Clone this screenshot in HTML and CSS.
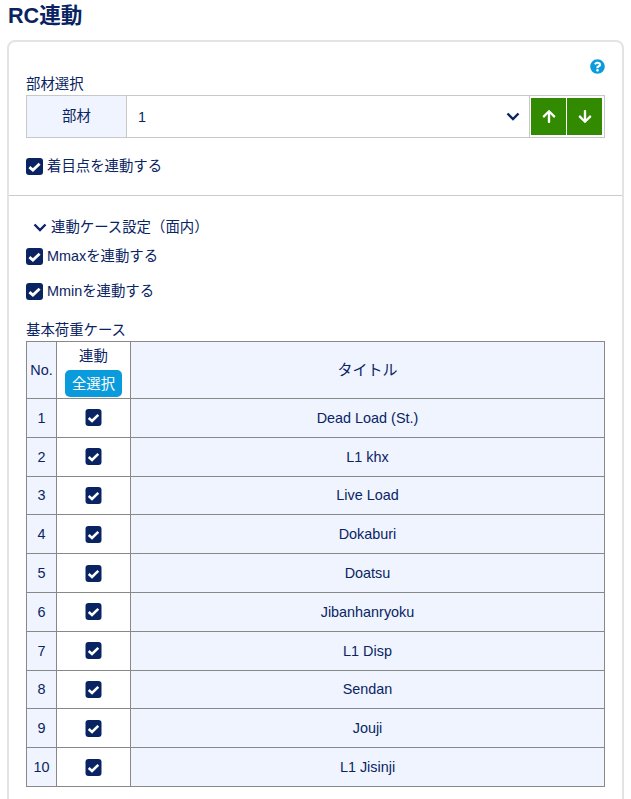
FILE: index.html
```html
<!DOCTYPE html>
<html lang="ja">
  <head>
    <meta charset="UTF-8" />
    <meta name="viewport" content="width=device-width, initial-scale=1.0" />
    <title>RC連動</title>
    <link rel="stylesheet" href="styles.css">
  </head>
  <body>
    <h1 class="page-title">RC連動</h1>

    <div class="card">
      <!-- Member selection -->
      <section class="card-top">
        <div class="help-row">
          <svg class="help-icon" viewBox="0 0 512 512"><path d="M504 256c0 136.997-111.043 248-248 248S8 392.997 8 256C8 119.083 119.043 8 256 8s248 111.083 248 248zM262.655 90c-54.497 0-89.255 22.957-116.549 63.758-3.536 5.286-2.353 12.415 2.715 16.258l34.699 26.31c5.205 3.947 12.621 3.008 16.665-2.122 17.864-22.658 30.113-35.797 57.303-35.797 20.429 0 45.698 13.148 45.698 32.958 0 14.976-12.363 22.667-32.534 33.976C247.128 238.528 216 254.941 216 296v4c0 6.627 5.373 12 12 12h56c6.627 0 12-5.373 12-12v-1.333c0-28.462 83.186-29.647 83.186-106.667 0-58.002-60.165-102-116.531-102zM256 338c-25.365 0-46 20.635-46 46 0 25.364 20.635 46 46 46s46-20.636 46-46c0-25.365-20.635-46-46-46z"/></svg>
        </div>
        <div class="field-label">部材選択</div>
        <div class="member-select">
          <div class="member-name">部材</div>
          <div class="member-value">
            <span>1</span>
            <svg class="chevron" viewBox="0 0 14 9"><path d="M1.5 1.5 7 7l5.5-5.5"/></svg>
          </div>
          <div class="member-buttons">
            <button class="arrow-btn" type="button">
              <svg viewBox="0 0 448 512"><path d="M34.9 289.5l-22.2-22.2c-9.4-9.4-9.4-24.6 0-33.9L207 39c9.4-9.4 24.6-9.4 33.9 0l194.3 194.3c9.4 9.4 9.4 24.6 0 33.9L413 289.4c-9.5 9.5-25 9.3-34.3-.4L264 168.6V456c0 13.3-10.7 24-24 24h-32c-13.3 0-24-10.7-24-24V168.6L69.2 289.1c-9.3 9.8-24.8 10-34.3.4z"/></svg>
            </button>
            <button class="arrow-btn" type="button">
              <svg viewBox="0 0 448 512"><path d="M413.1 222.5l22.2 22.2c9.4 9.4 9.4 24.6 0 33.9L241 473c-9.4 9.4-24.6 9.4-33.9 0L12.7 278.6c-9.4-9.4-9.4-24.6 0-33.9l22.2-22.2c9.5-9.5 25-9.3 34.3.4L184 343.4V56c0-13.3 10.7-24 24-24h32c13.3 0 24 10.7 24 24v287.4l114.8-120.5c9.3-9.8 24.8-10 34.3-.4z"/></svg>
            </button>
          </div>
        </div>
        <label class="check-row check-row-first">
          <span class="check"><svg viewBox="0 0 16 16"><path d="M3.2 8.6 6.5 11.4 12.8 5.4"/></svg></span>
          着目点を連動する
        </label>
      </section>

      <!-- Link case settings -->
      <section class="card-bottom">
        <div class="section-toggle">
          <svg class="chevron" viewBox="0 0 14 9"><path d="M1.5 1.5 7 7l5.5-5.5"/></svg>
          連動ケース設定（面内）
        </div>
        <label class="check-row">
          <span class="check"><svg viewBox="0 0 16 16"><path d="M3.2 8.6 6.5 11.4 12.8 5.4"/></svg></span>
          Mmaxを連動する
        </label>
        <label class="check-row check-row-second">
          <span class="check"><svg viewBox="0 0 16 16"><path d="M3.2 8.6 6.5 11.4 12.8 5.4"/></svg></span>
          Mminを連動する
        </label>

        <div class="table-label">基本荷重ケース</div>
        <table class="case-table">
          <thead>
            <tr>
              <th class="col-no">No.</th>
              <th class="col-link">
                <div>連動</div>
                <button class="select-all" type="button">全選択</button>
              </th>
              <th class="col-title">タイトル</th>
            </tr>
          </thead>
          <tbody id="caseRows"></tbody>
        </table>
      </section>
    </div>

    <script>
      const cases = [
        "Dead Load (St.)",
        "L1 khx",
        "Live Load",
        "Dokaburi",
        "Doatsu",
        "Jibanhanryoku",
        "L1 Disp",
        "Sendan",
        "Jouji",
        "L1 Jisinji",
      ];

      // Fill the load case table
      const caseRows = document.getElementById("caseRows");
      cases.forEach((title, i) => {
        const row = document.createElement("tr");
        row.innerHTML = `
          <td class="cell-no">${i + 1}</td>
          <td class="cell-link"><span class="check check-small"><svg viewBox="0 0 16 16"><path d="M3.2 8.6 6.5 11.4 12.8 5.4"/></svg></span></td>
          <td class="cell-title">${title}</td>`;
        caseRows.appendChild(row);
      });
    </script>
  </body>
</html>
```

FILE: styles.css
```css
html {
  height: 100%;
  overflow: hidden;
}
body {
  margin: 0;
  padding: 0 7px;
  font-family: "Liberation Sans", "Noto Sans CJK JP", sans-serif;
  font-size: 14.4px;
  line-height: 20px;
  color: #0a2463;
  background-color: #fff;
}
.page-title {
  margin: 0;
  height: 40px;
  padding: 3px 0 0 1px;
  box-sizing: border-box;
  font-size: 21.6px;
  line-height: 25px;
  font-weight: bold;
  color: #0a2463;
}
.card {
  border: 2px solid #e3e3e3;
  border-radius: 8px;
  background-color: #fff;
}
.card-top {
  padding: 17px 17px 19px;
  border-bottom: 1px solid #ccc;
}
.help-row {
  display: flex;
  justify-content: flex-end;
  height: 15px;
}
.help-icon {
  width: 15px;
  height: 15px;
  fill: #0a9bdc;
}
.field-label {
  margin-bottom: 1px;
}
.member-select {
  display: flex;
  height: 43px;
  box-sizing: border-box;
  border: 1px solid #c8c8c8;
}
.member-name {
  display: flex;
  align-items: center;
  justify-content: center;
  width: 99px;
  padding-bottom: 2px;
  background-color: #eff4ff;
  border-right: 1px solid #c8c8c8;
}
.member-value {
  flex: 1;
  display: flex;
  align-items: center;
  justify-content: space-between;
  padding: 0 9px 0 11px;
}
.member-buttons {
  display: flex;
  gap: 1px;
  padding: 2px 2px 2px 1px;
  border-left: 1px solid #c8c8c8;
}
.arrow-btn {
  display: flex;
  align-items: center;
  justify-content: center;
  width: 35px;
  padding: 0;
  border: none;
  background-color: #328a00;
}
.arrow-btn svg {
  width: 14px;
  height: 15px;
  fill: #fff;
}
.chevron {
  width: 14px;
  height: 9px;
  fill: none;
  stroke: #0a2463;
  stroke-width: 2.4;
}
.check-row {
  display: flex;
  align-items: center;
  gap: 4px;
  height: 20px;
}
.check-row-first {
  margin-top: 18px;
}
.check-row-second {
  margin-top: 15px;
}
.check {
  display: inline-flex;
  width: 17px;
  height: 17px;
  border-radius: 3px;
  background-color: #0a2463;
}
.check-small {
  display: flex;
  width: 16px;
  height: 17px;
  margin: 0 auto;
  transform: translateX(-0.5px);
}
.check svg {
  width: 100%;
  height: 100%;
  fill: none;
  stroke: #fff;
  stroke-width: 2.6;
}
.card-bottom {
  padding: 21px 17px 40px;
}
.section-toggle {
  display: flex;
  align-items: center;
  gap: 4px;
  height: 20px;
  margin-bottom: 9px;
  padding-left: 7px;
}
.table-label {
  margin-top: 19px;
  margin-bottom: 1px;
}
.case-table {
  width: 579px;
  table-layout: fixed;
  border-collapse: collapse;
  font-size: 14.4px;
}
.case-table th,
.case-table td {
  border: 1px solid #888;
  padding: 0;
  text-align: center;
  font-weight: normal;
  height: 37.8px;
}
.case-table th {
  height: 56px;
}
.col-no {
  width: 29px;
  background-color: #eff4ff;
}
.case-table .col-link {
  width: 74px;
  padding-top: 4px;
  box-sizing: border-box;
  vertical-align: top;
}
.case-table .col-title {
  font-size: 15px;
  background-color: #eff4ff;
}
.select-all {
  display: block;
  margin: 4px auto 0;
  width: 57px;
  height: 27px;
  padding: 0;
  border: none;
  border-radius: 5px;
  font: inherit;
  color: #fff;
  background-color: #0a9bdc;
}
.cell-no {
  background-color: #eff4ff;
}
.cell-title {
  background-color: #eff4ff;
}
```
